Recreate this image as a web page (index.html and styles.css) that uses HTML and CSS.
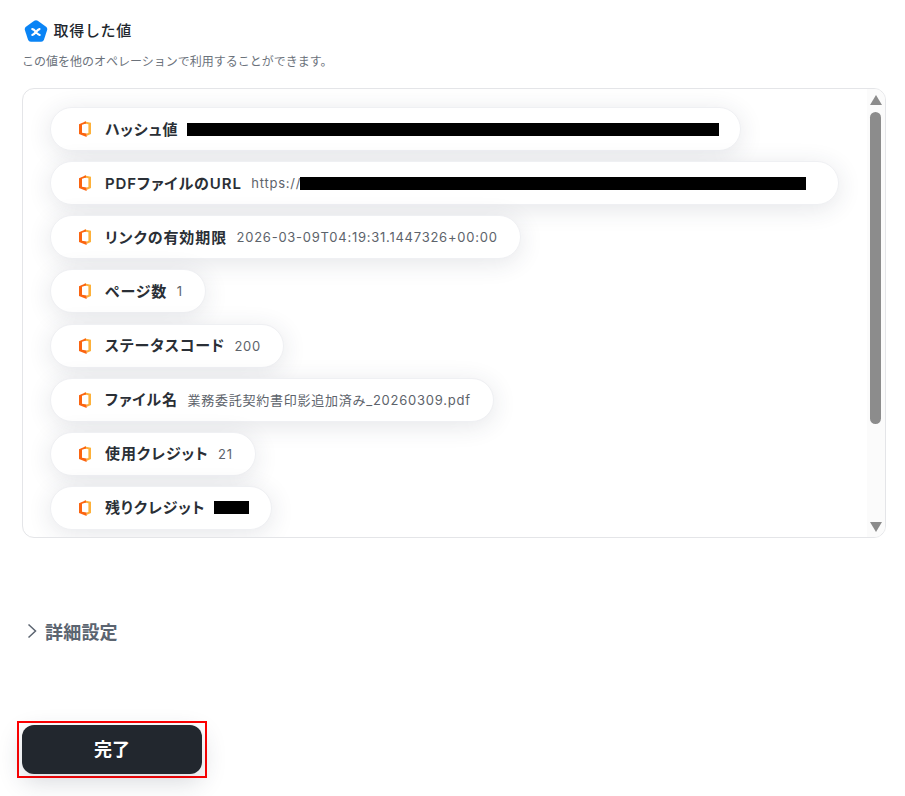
FILE: index.html
```html
<!DOCTYPE html>
<html lang="ja">
<head>
<meta charset="utf-8">
<title>取得した値</title>
<link rel="stylesheet" href="styles.css">
</head>
<body>
<svg class="defs" width="0" height="0" aria-hidden="true"><symbol id="office" viewBox="0 0 12 16"><path d="M5.5 0.4L12 1.7V13L7.5 15V12.6L9.4 12V3.2L5.5 2.6Z" fill="#fdb13a"/><path d="M0 3.3L7 0.2V2.6L3 3.8V11.8L7.6 12.6V16L0 13Z" fill="#fb6410"/></symbol></svg>
<main class="page">
  <header class="heading">
    <svg class="badge" viewBox="1 0.5 22 21" width="24" height="23"><path d="M10.4 1.2a2.8 2.8 0 0 1 3.2 0l7.6 5.5a2.8 2.8 0 0 1 1 3l-2.9 8.9a2.8 2.8 0 0 1-2.6 1.9H7.3a2.8 2.8 0 0 1-2.6-1.9L1.8 9.7a2.8 2.8 0 0 1 1-3z" fill="#0a84f5"/><path d="M8.6 8.8c2.6.2 3.8 4.6 6.8 5.4M15.2 8.8c-2.6.6-3.8 4.6-6.6 5.4" stroke="#fff" stroke-width="2" stroke-linecap="round" fill="none"/></svg>
    <h2 class="title">取得した値</h2>
  </header>
  <p class="sub">この値を他のオペレーションで利用することができます。</p>

  <section class="box">
    <div class="list">
      <div class="pill"><svg class="ico"><use href="#office"/></svg><span class="name">ハッシュ値</span><span class="redact r1"></span></div>
      <div class="pill"><svg class="ico"><use href="#office"/></svg><span class="name">PDFファイルのURL</span><span class="val">https://</span><span class="redact r2"></span></div>
      <div class="pill"><svg class="ico"><use href="#office"/></svg><span class="name">リンクの有効期限</span><span class="val">2026-03-09T04:19:31.1447326+00:00</span></div>
      <div class="pill"><svg class="ico"><use href="#office"/></svg><span class="name">ページ数</span><span class="val">1</span></div>
      <div class="pill"><svg class="ico"><use href="#office"/></svg><span class="name">ステータスコード</span><span class="val">200</span></div>
      <div class="pill"><svg class="ico"><use href="#office"/></svg><span class="name">ファイル名</span><span class="val">業務委託契約書印影追加済み_20260309.pdf</span></div>
      <div class="pill"><svg class="ico"><use href="#office"/></svg><span class="name">使用クレジット</span><span class="val">21</span></div>
      <div class="pill"><svg class="ico"><use href="#office"/></svg><span class="name">残りクレジット</span><span class="redact r3"></span></div>
    </div>
    <div class="scrollbar">
      <span class="arrow up"></span>
      <span class="track"><span class="thumb"></span></span>
      <span class="arrow down"></span>
    </div>
  </section>

  <div class="details">
    <svg class="chev" viewBox="0 0 10 16" width="10" height="16"><path d="M1.5 1.5L8.5 8L1.5 14.5" fill="none" stroke="#5b6470" stroke-width="1.5"/></svg>
    <span class="details-label">詳細設定</span>
  </div>

  <div class="actions"><button class="done" type="button">完了</button></div>
</main>
</body>
</html>
```
FILE: styles.css
```css
* { box-sizing: border-box; }
html, body { margin: 0; padding: 0; height: 100%; background: #fff; overflow: hidden; }
body { font-family: Inter, "Noto Sans CJK JP", sans-serif; color: #22272e; }
.defs { position: absolute; }
.page { padding: 19px 19px 0 22px; }
.heading { display: flex; align-items: center; gap: 6px; margin-left: 1.5px; height: 24px; }
.badge { display: block; flex: none; }
.title { margin: 0; font-size: 15px; font-weight: 500; letter-spacing: .7px; line-height: 24px; color: #22272e; }
.sub { margin: 10px 0 0; font-size: 12px; line-height: 18px; color: #6b727b; }
.box { margin-top: 17px; height: 450px; border: 1px solid #e4e5e8; border-radius: 12px; display: flex; justify-content: space-between; overflow: hidden; }
.list { flex: 1; padding: 18px 0 0 27px; display: flex; flex-direction: column; gap: 10.15px; align-items: flex-start; overflow: hidden; }
.pill { flex: none; height: 44px; display: flex; align-items: center; padding: 0 22px 0 28px; border: 1px solid #eff0f3; border-radius: 22px; background: #fff; box-shadow: 0 4px 24px rgba(40, 50, 70, .12); white-space: nowrap; }
.ico { width: 12px; height: 16px; flex: none; margin-right: 14px; }
.name { padding-bottom: 2px; font-size: 15px; font-weight: 600; letter-spacing: .9px; font-feature-settings: "palt"; color: #2a2f36; }
.val { margin-left: 9.5px; font-size: 13px; letter-spacing: .75px; color: #5d636b; }
.redact { display: block; background: #000; height: 13px; }
.r1 { width: 532px; margin-left: 8.5px; margin-right: -1px; }
.r2 { width: 506px; margin-left: -1px; margin-right: 10px; }
.r3 { width: 35px; margin-left: 8.5px; }
.scrollbar { flex: none; width: 18px; background: #fbfbfb; display: flex; flex-direction: column; align-items: center; padding: 6px 1px 5px 0; }
.arrow { flex: none; width: 0; height: 0; border-left: 6.5px solid transparent; border-right: 6.5px solid transparent; }
.arrow.up { border-bottom: 10px solid #8c8c8c; }
.arrow.down { border-top: 10px solid #8c8c8c; }
.track { flex: 1; width: 11px; padding-top: 7px; }
.thumb { display: block; width: 11px; height: 312px; border-radius: 6px; background: #8c8c8c; }
.details { margin-top: 81px; display: flex; align-items: center; gap: 8px; margin-left: 5px; height: 24px; }
.chev { display: block; }
.details-label { font-size: 18px; font-weight: 600; letter-spacing: .2px; color: #5b6470; }
.actions { margin-top: 78px; margin-left: -5px; width: 190px; height: 57px; padding: 2px 3px; border: 2px solid #f00; }
.done { display: block; width: 180px; height: 49px; border: 0; padding: 0 0 4px; border-radius: 12px; background: #22272e; color: #fff; font: 700 18px Inter, "Noto Sans CJK JP", sans-serif; box-shadow: 0 8px 24px rgba(40, 50, 70, .18); }
```
